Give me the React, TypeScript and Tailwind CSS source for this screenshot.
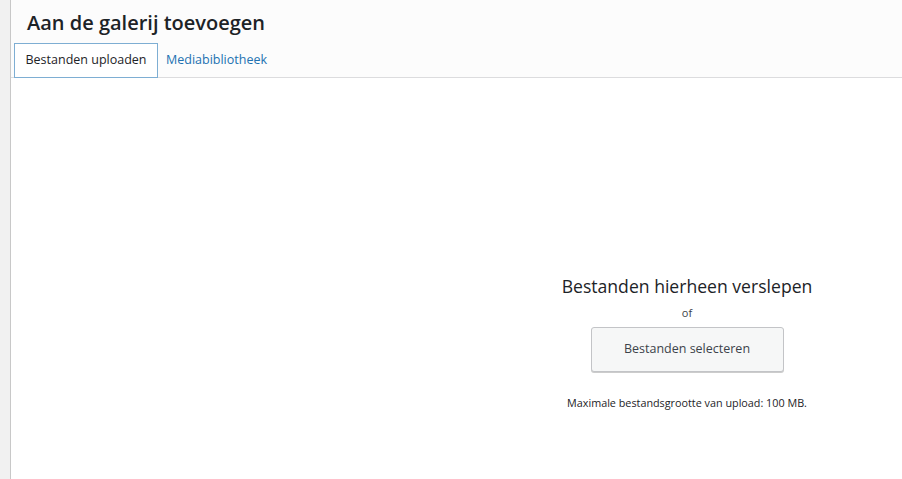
export default function App() {
  return (
    <div
      className="flex h-[479px] w-[902px] overflow-hidden bg-white text-[#1d2327]"
      style={{ fontFamily: '"Open Sans", "Noto Sans", sans-serif' }}
    >
      <div className="w-[10px] shrink-0 bg-[#f1f1f1]" />
      <div className="w-px shrink-0 bg-[#c8c8c8]" />
      <div className="flex min-w-0 flex-1 flex-col">
        <div className="relative h-[78px] shrink-0 border-b border-[#dcdcde] bg-[#fcfcfc]">
          <h1 className="pl-[16px] pt-[8px] text-[20px] font-semibold leading-[30px] text-[#1d2327]">
            Aan de galerij toevoegen
          </h1>
          <div className="absolute left-[3px] top-[43px] flex items-start">
            <div className="flex h-[35px] w-[144px] items-center justify-center border border-[#7eaed3] bg-white text-[12.5px] text-[#1d2327]">
              Bestanden uploaden
            </div>
            <div className="flex h-[35px] items-center px-[8px] text-[12.5px] text-[#2271b1]">
              Mediabibliotheek
            </div>
          </div>
        </div>
        <div className="flex-1 overflow-hidden">
          <div className="flex w-[1352px] flex-col items-center pt-[197px] text-center">
            <div className="text-[17.6px] leading-[23px] text-[#1d2327]">Bestanden hierheen verslepen</div>
            <div className="mt-[8px] text-[11px] leading-[14px] text-[#3c434a]">of</div>
            <button className="mt-[7px] h-[45px] w-[193px] rounded-[3px] border border-[#c3c4c7] bg-[#f6f7f7] text-[12.5px] text-[#3c434a] shadow-[0_1px_0_#ccc]">
              Bestanden selecteren
            </button>
            <div className="mt-[24px] text-[10.8px] leading-[14px] text-[#1d2327]">
              Maximale bestandsgrootte van upload: 100 MB.
            </div>
          </div>
        </div>
      </div>
    </div>
  );
}
